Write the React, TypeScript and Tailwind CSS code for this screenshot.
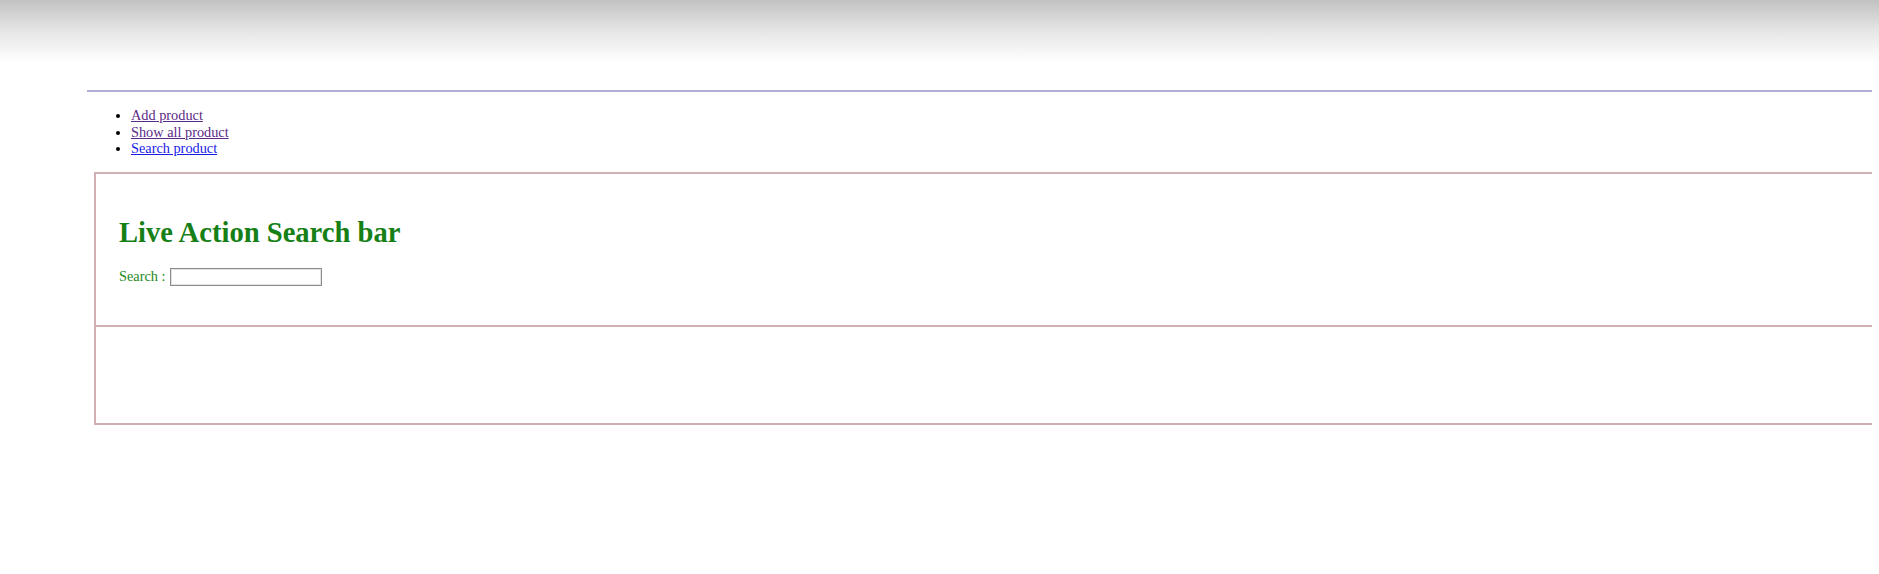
import React from "react";

export default function App() {
  return (
    <div className="min-h-[574px] w-[1879px] bg-white font-['Liberation_Serif','Times_New_Roman',serif] text-[14.3px] leading-[16.6px] text-black">
      <div className="h-[62px] bg-gradient-to-b from-[#c2c2c2] via-[#e6e6e6] to-white" />
      <div className="ml-[87px] w-[1785px] pt-[28px]">
        <div className="h-[2px] bg-[#aeaed6]" />
        <ul className="mt-[15px] list-disc pl-[44px]">
          <li>
            <a href="#" className="text-[#5b2a86] underline">Add product</a>
          </li>
          <li>
            <a href="#" className="text-[#5b2a86] underline">Show all product</a>
          </li>
          <li>
            <a href="#" className="text-[#1a1ae6] underline">Search product</a>
          </li>
        </ul>
        <div className="ml-[7px] mt-[15px] border-y-2 border-l-2 border-[#d0b0b2]">
          <div className="border-b-2 border-[#d0b0b2] pl-[23px] pt-[42px] pb-[39px]">
            <h1 className="text-[28.6px] font-bold leading-[33px] text-[#168016]">
              Live Action Search bar
            </h1>
            <div className="mt-[19px] flex items-center text-[#228a22]">
              <span>Search :</span>
              <input
                type="text"
                className="ml-[5px] h-[18px] w-[152px] border border-[#8c8c8c] bg-white shadow-[inset_0_0_0_1px_#e2e2e2] outline-none"
              />
            </div>
          </div>
          <div className="h-[96px]" />
        </div>
      </div>
    </div>
  );
}
